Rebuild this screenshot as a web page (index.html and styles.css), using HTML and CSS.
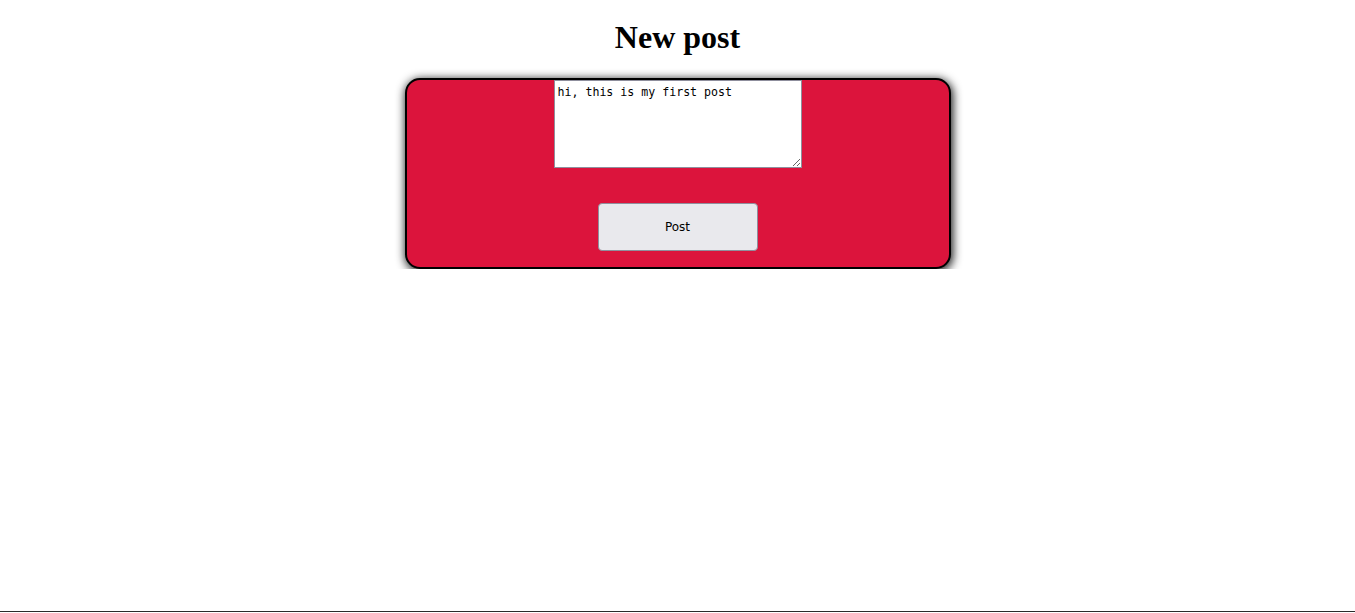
FILE: index.html
```html
<!DOCTYPE html>
<html>
<head>
<meta charset="utf-8">
<title>New post</title>
<link rel="stylesheet" href="styles.css">
</head>
<body>
<h1 class="title">New post</h1>
<form class="card">
  <textarea class="post-text">hi, this is my first post</textarea>
  <button type="button" class="post-btn">Post</button>
</form>
<div class="bottom-line"></div>
</body>
</html>
```
FILE: styles.css
```css
html, body {
  background: #ffffff;
}
body {
  margin: 8px;
  font-family: "Liberation Serif", serif;
}
.title {
  font-family: "Liberation Serif", serif;
  font-size: 32px;
  font-weight: bold;
  text-align: center;
  margin: 11px 0 22px;
  line-height: 37px;
  color: #000;
}
.card {
  width: 542px;
  margin: 0 auto;
  background: #dc143c;
  border: 2px solid #000;
  border-radius: 15px;
  box-shadow: 1px 2px 10px 1px rgba(0, 0, 0, 0.9);
  display: flex;
  flex-direction: column;
  align-items: center;
  padding: 0 0 16px;
}
.post-text {
  box-sizing: border-box;
  width: 248px;
  height: 88px;
  margin: 0;
  padding: 4px 3px;
  border: 1px solid #8f8f9d;
  background: #fff;
  font-family: "DejaVu Sans Mono", monospace;
  font-size: 11.6px;
  line-height: 14px;
  color: #000;
  resize: both;
}
.post-btn {
  box-sizing: border-box;
  width: 160px;
  height: 48px;
  margin-top: 35px;
  background: #e9e9ed;
  border: 1px solid #8f8f9d;
  border-radius: 4px;
  font-family: "DejaVu Sans", sans-serif;
  font-size: 12px;
  color: #000;
  padding: 0;
}
.bottom-line {
  position: fixed;
  left: 0;
  right: 0;
  bottom: 1px;
  height: 1px;
  background: #2b2b2b;
}
```
